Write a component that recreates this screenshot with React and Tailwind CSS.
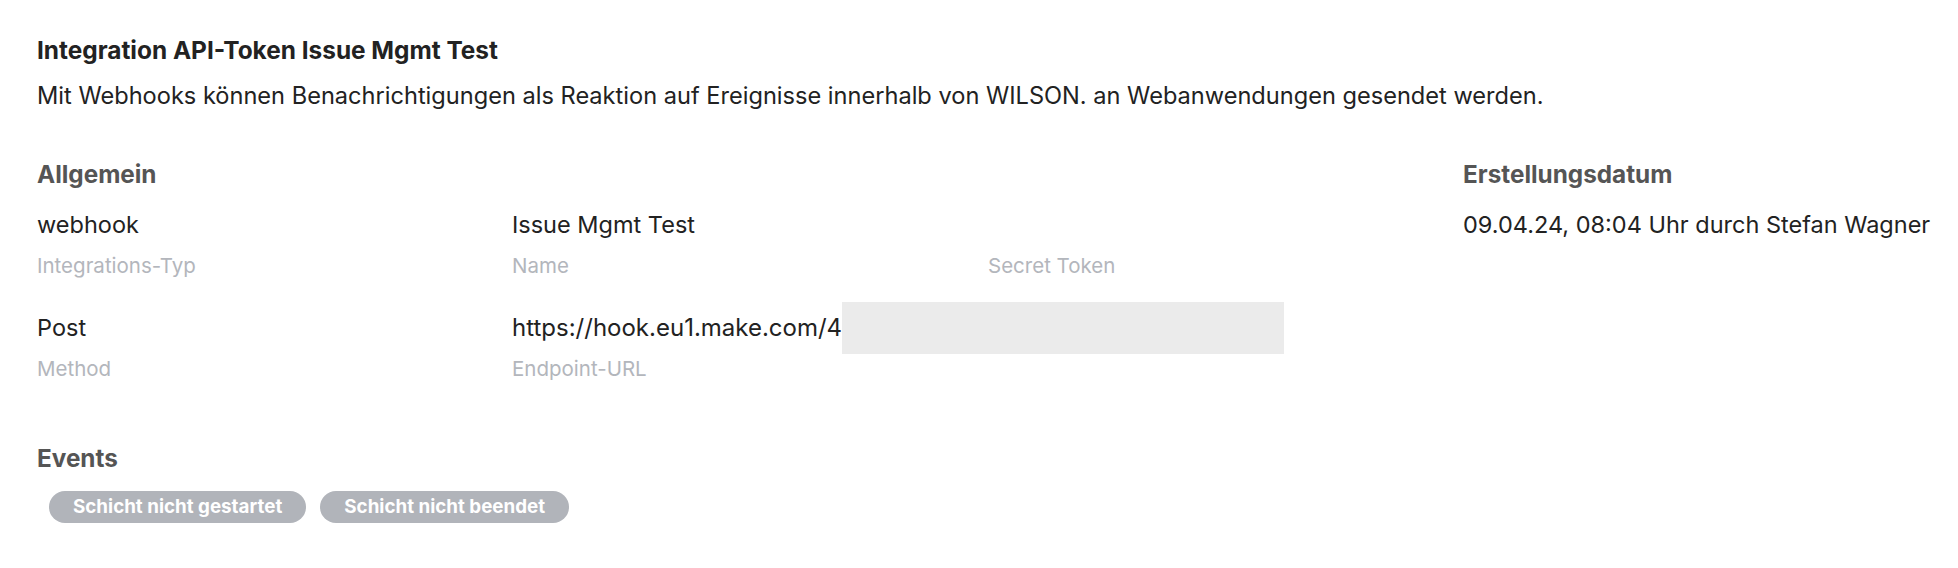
import React from 'react';

const Field = ({ value, label, children }) => (
  <div className="flex flex-col">
    <div className="h-[32px] flex items-center text-[23.5px] leading-[32px] text-[#222]">{children || value}</div>
    <div className="mt-[11px] text-[20.5px] leading-[28px] text-[#b3b6bc]">{label}</div>
  </div>
);

const events = ['Schicht nicht gestartet', 'Schicht nicht beendet'];

export default function App() {
  return (
    <div className="min-h-screen bg-white font-['Inter',sans-serif] pl-[37px] pt-[34px]">
      <h1 className="text-[24.4px] font-bold leading-[32px] text-[#222]">Integration API-Token Issue Mgmt Test</h1>
      <p className="mt-[14px] text-[23.6px] leading-[32px] text-[#222]">
        Mit Webhooks können Benachrichtigungen als Reaktion auf Ereignisse innerhalb von WILSON. an Webanwendungen gesendet werden.
      </p>

      <div className="mt-[46px] flex">
        <div className="w-[1426px]">
          <h2 className="text-[24.3px] font-bold leading-[32px] text-[#555]">Allgemein</h2>
          <div className="mt-[19px] grid grid-cols-[475px_476px_475px]">
            <Field value="webhook" label="Integrations-Typ" />
            <Field value="Issue Mgmt Test" label="Name" />
            <Field value="" label="Secret Token" />
          </div>
          <div className="mt-[32px] grid grid-cols-[475px_476px_475px]">
            <Field value="Post" label="Method" />
            <Field label="Endpoint-URL">
              <span className="whitespace-nowrap text-[24px]">https://hook.eu1.make.com/4</span>
              <span className="shrink-0 -my-[10px] h-[52px] w-[442px] bg-[#ebebeb]" />
            </Field>
          </div>
        </div>
        <div>
          <h2 className="text-[24.3px] font-bold leading-[32px] text-[#555]">Erstellungsdatum</h2>
          <div className="mt-[19px] text-[23.5px] leading-[32px] text-[#222] whitespace-nowrap">
            09.04.24, 08:04 Uhr durch Stefan Wagner
          </div>
        </div>
      </div>

      <h2 className="mt-[59px] text-[24.3px] font-bold leading-[32px] text-[#555]">Events</h2>
      <div className="mt-[17px] ml-[12px] flex gap-[14px]">
        {events.map((e) => (
          <span key={e} className="h-[32px] px-[24px] flex items-center rounded-full bg-[#b1b4ba] text-white text-[18.8px] font-bold">
            {e}
          </span>
        ))}
      </div>
    </div>
  );
}
